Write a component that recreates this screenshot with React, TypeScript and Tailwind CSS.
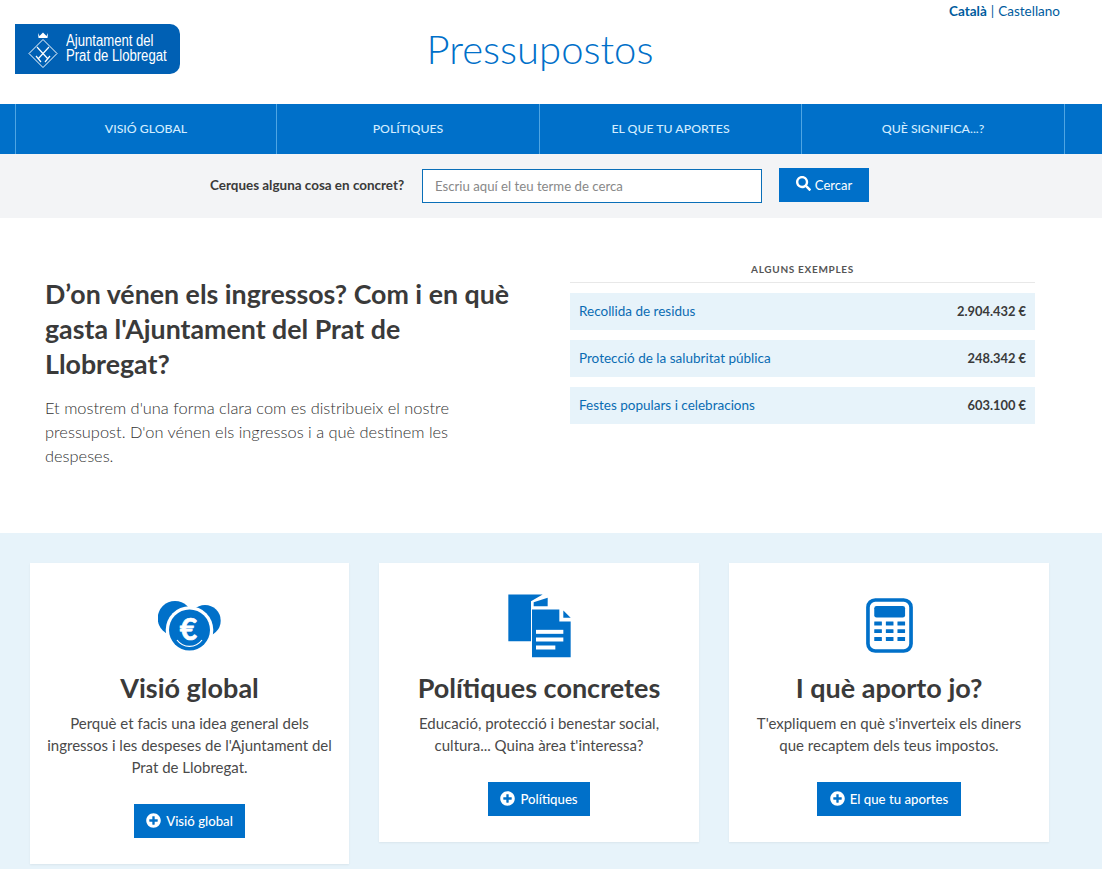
import { FaPlusCircle, FaSearch } from "react-icons/fa";

const navItems = [
  { label: "VISIÓ GLOBAL", width: "w-[261px]" },
  { label: "POLÍTIQUES", width: "w-[263px]" },
  { label: "EL QUE TU APORTES", width: "w-[262px]" },
  { label: "QUÈ SIGNIFICA...?", width: "w-[264px]" },
];

const examples = [
  { name: "Recollida de residus", amount: "2.904.432 €" },
  { name: "Protecció de la salubritat pública", amount: "248.342 €" },
  { name: "Festes populars i celebracions", amount: "603.100 €" },
];

const Logo = () => (
  <div className="flex h-[50px] w-[165px] items-center rounded-r-[10px] bg-[#0060b4] pl-[12px] text-white">
    <svg viewBox="0 0 32 38" className="h-[38px] w-[32px] shrink-0" fill="none" stroke="white">
      <path d="M11 3 L12.5 6 L16 2.5 L19.5 6 L21 3 L20.5 8 H11.5 Z" fill="white" stroke="none" />
      <path d="M16 9.5 L30 23.5 L16 37.5 L2 23.5 Z" strokeWidth="1" />
      <path d="M10 17 L21 29 M22 17 L11 29 M9 26 L14 32 M18 32 L23 26" strokeWidth="1.2" />
    </svg>
    <div className="-mt-[2px] ml-[7px] origin-left scale-x-[0.82] whitespace-nowrap font-['Liberation_Sans',sans-serif] text-[16px] leading-[15px]">
      <div>Ajuntament del</div>
      <div>Prat de Llobregat</div>
    </div>
  </div>
);

const CoinsIcon = () => (
  <svg viewBox="0 0 64 56" className="mt-[4px] h-[56px] w-[64px]">
    <circle cx="17" cy="19.3" r="17.3" fill="#0070c9" />
    <circle cx="47" cy="21.7" r="15.7" fill="#0070c9" />
    <circle cx="31.5" cy="31" r="23.8" fill="white" />
    <circle cx="31.5" cy="31" r="20.5" fill="#0070c9" />
    <path d="M19 41 A15.5 15.5 0 0 0 44 41" fill="none" stroke="white" strokeWidth="1.2" />
    <text
      x="30.5"
      y="41"
      textAnchor="middle"
      fill="white"
      stroke="white"
      strokeWidth="0.7"
      fontSize="30"
      fontWeight="700"
      fontFamily="Lato, sans-serif"
    >
      €
    </text>
  </svg>
);

const DocsIcon = () => (
  <svg viewBox="50 20 195 200" className="h-[67px] w-[65px]" fill="#0070c9">
    <path d="M54 27 H157 L122 47 V167 H54 Z" />
    <path d="M130 50 L172 37 V62 H130 Z" />
    <path d="M125 72 H207 V108 H241 V215 H125 Z" />
    <path d="M219 75 L241 97 H219 Z" />
    <rect x="137" y="133" width="82" height="12" fill="white" />
    <rect x="137" y="156" width="82" height="12" fill="white" />
    <rect x="137" y="180" width="58" height="12" fill="white" />
  </svg>
);

const CalculatorIcon = () => (
  <svg viewBox="45 20 146 172" className="h-[57px] w-[49px]" fill="#0070c9">
    <rect x="53" y="29" width="130" height="154" rx="22" fill="white" stroke="#0070c9" strokeWidth="11" />
    <rect x="72" y="47" width="93" height="35" rx="7" />
    {[94, 117, 141].map((y) =>
      [72, 107, 142].map((x) => <rect key={`${x}-${y}`} x={x} y={y} width="23" height="12" rx="1" />),
    )}
  </svg>
);

const cards = [
  {
    icon: <CoinsIcon />,
    title: "Visió global",
    text: ["Perquè et facis una idea general dels", "ingressos i les despeses de l'Ajuntament del", "Prat de Llobregat."],
    button: "Visió global",
    width: "w-[319px]",
  },
  {
    icon: <DocsIcon />,
    title: "Polítiques concretes",
    text: ["Educació, protecció i benestar social,", "cultura... Quina àrea t'interessa?"],
    button: "Polítiques",
    width: "w-[320px]",
  },
  {
    icon: <CalculatorIcon />,
    title: "I què aporto jo?",
    text: ["T'expliquem en què s'inverteix els diners", "que recaptem dels teus impostos."],
    button: "El que tu aportes",
    width: "w-[320px]",
  },
];

export default function App() {
  return (
    <div className="h-[869px] overflow-hidden bg-white font-['Lato',sans-serif] text-[#333]">
      <header className="relative flex h-[104px] items-start pl-[15px] pt-[24px]">
        <Logo />
        <h1 className="absolute left-0 top-[23px] w-[1080px] text-center text-[40px] font-light leading-[52px] text-[#0070c9]">
          Pressupostos
        </h1>
        <div className="absolute right-[42px] top-[3px] text-[13.5px] leading-[17px] text-[#005c9e]">
          <span className="font-bold">Català</span>
          <span className="mx-[4px]">|</span>
          <span>Castellano</span>
        </div>
      </header>

      <nav className="flex h-[50px] bg-[#0070c9] pl-[15px]">
        {navItems.map((item) => (
          <a
            key={item.label}
            className={`${item.width} flex items-center justify-center border-l border-[#4ea5e3] pt-[1px] text-[12.3px] font-medium text-[#d3edff] last:border-r`}
          >
            {item.label}
          </a>
        ))}
      </nav>

      <div className="flex h-[64px] items-center bg-[#f3f4f6] pl-[210px]">
        <label className="-mt-[2px] w-[212px] text-[13.45px] font-bold text-[#3a3a3a]">Cerques alguna cosa en concret?</label>
        <input
          className="h-[34px] w-[340px] border border-[#0a6fb8] bg-white px-[12px] text-[13.2px] placeholder:text-[#888]"
          placeholder="Escriu aquí el teu terme de cerca"
        />
        <button className="-mt-[2px] ml-[17px] flex h-[34px] w-[90px] items-center justify-center gap-[4px] bg-[#0070c9] pt-[1px] text-[13px] text-white">
          <FaSearch className="-mt-[4px] text-[15px]" />
          Cercar
        </button>
      </div>

      <section className="flex h-[315px]">
        <div className="w-[570px] pl-[45px] pt-[59px]">
          <h2 className="w-[470px] text-[26.75px] font-bold leading-[35px] text-[#3a3a3a]">
            D’on vénen els ingressos? Com i en què gasta l'Ajuntament del Prat de Llobregat?
          </h2>
          <p className="mt-[14px] w-[425px] text-[16.4px] font-light leading-[24px] text-[#333]">
            Et mostrem d'una forma clara com es distribueix el nostre pressupost. D'on vénen els ingressos i a què destinem les despeses.
          </p>
        </div>
        <div className="w-[465px] pt-[44px]">
          <div className="border-b border-[#e8e8e8] pb-[5px] text-center text-[10px] font-bold leading-[15px] tracking-[0.7px] text-[#555]">
            ALGUNS EXEMPLES
          </div>
          <ul className="mt-[10px] flex flex-col gap-[10px]">
            {examples.map((row) => (
              <li key={row.name} className="flex h-[37px] items-center justify-between bg-[#e7f3fa] px-[9px] text-[13.5px]">
                <span className="text-[#0a6cb3]">{row.name}</span>
                <span className="text-[12.9px] font-bold text-[#3a3a3a]">{row.amount}</span>
              </li>
            ))}
          </ul>
        </div>
      </section>

      <section className="flex h-[336px] items-start gap-[30px] bg-[#e7f3fa] pl-[30px] pt-[30px]">
        {cards.map((card) => (
          <article
            key={card.title}
            className={`${card.width} flex flex-col items-center bg-white pb-[26px] pt-[27px] text-center shadow-[0_1px_2px_rgba(0,0,0,0.06)]`}
          >
            <div className="flex h-[70px] items-center justify-center">{card.icon}</div>
            <h3 className="mt-[10px] text-[27px] font-bold leading-[36px] text-[#3a3a3a]">{card.title}</h3>
            <p className="mt-[6px] text-[15px] leading-[22px] text-[#4a4a4a]">
              {card.text.map((line) => (
                <span key={line} className="block whitespace-nowrap">
                  {line}
                </span>
              ))}
            </p>
            <button className="mt-[26px] flex h-[34px] items-center gap-[5px] bg-[#0070c9] px-[12.5px] pt-[2px] text-[13.2px] font-medium text-white">
              <FaPlusCircle className="-mt-[4px] text-[15px]" />
              {card.button}
            </button>
          </article>
        ))}
      </section>
    </div>
  );
}
